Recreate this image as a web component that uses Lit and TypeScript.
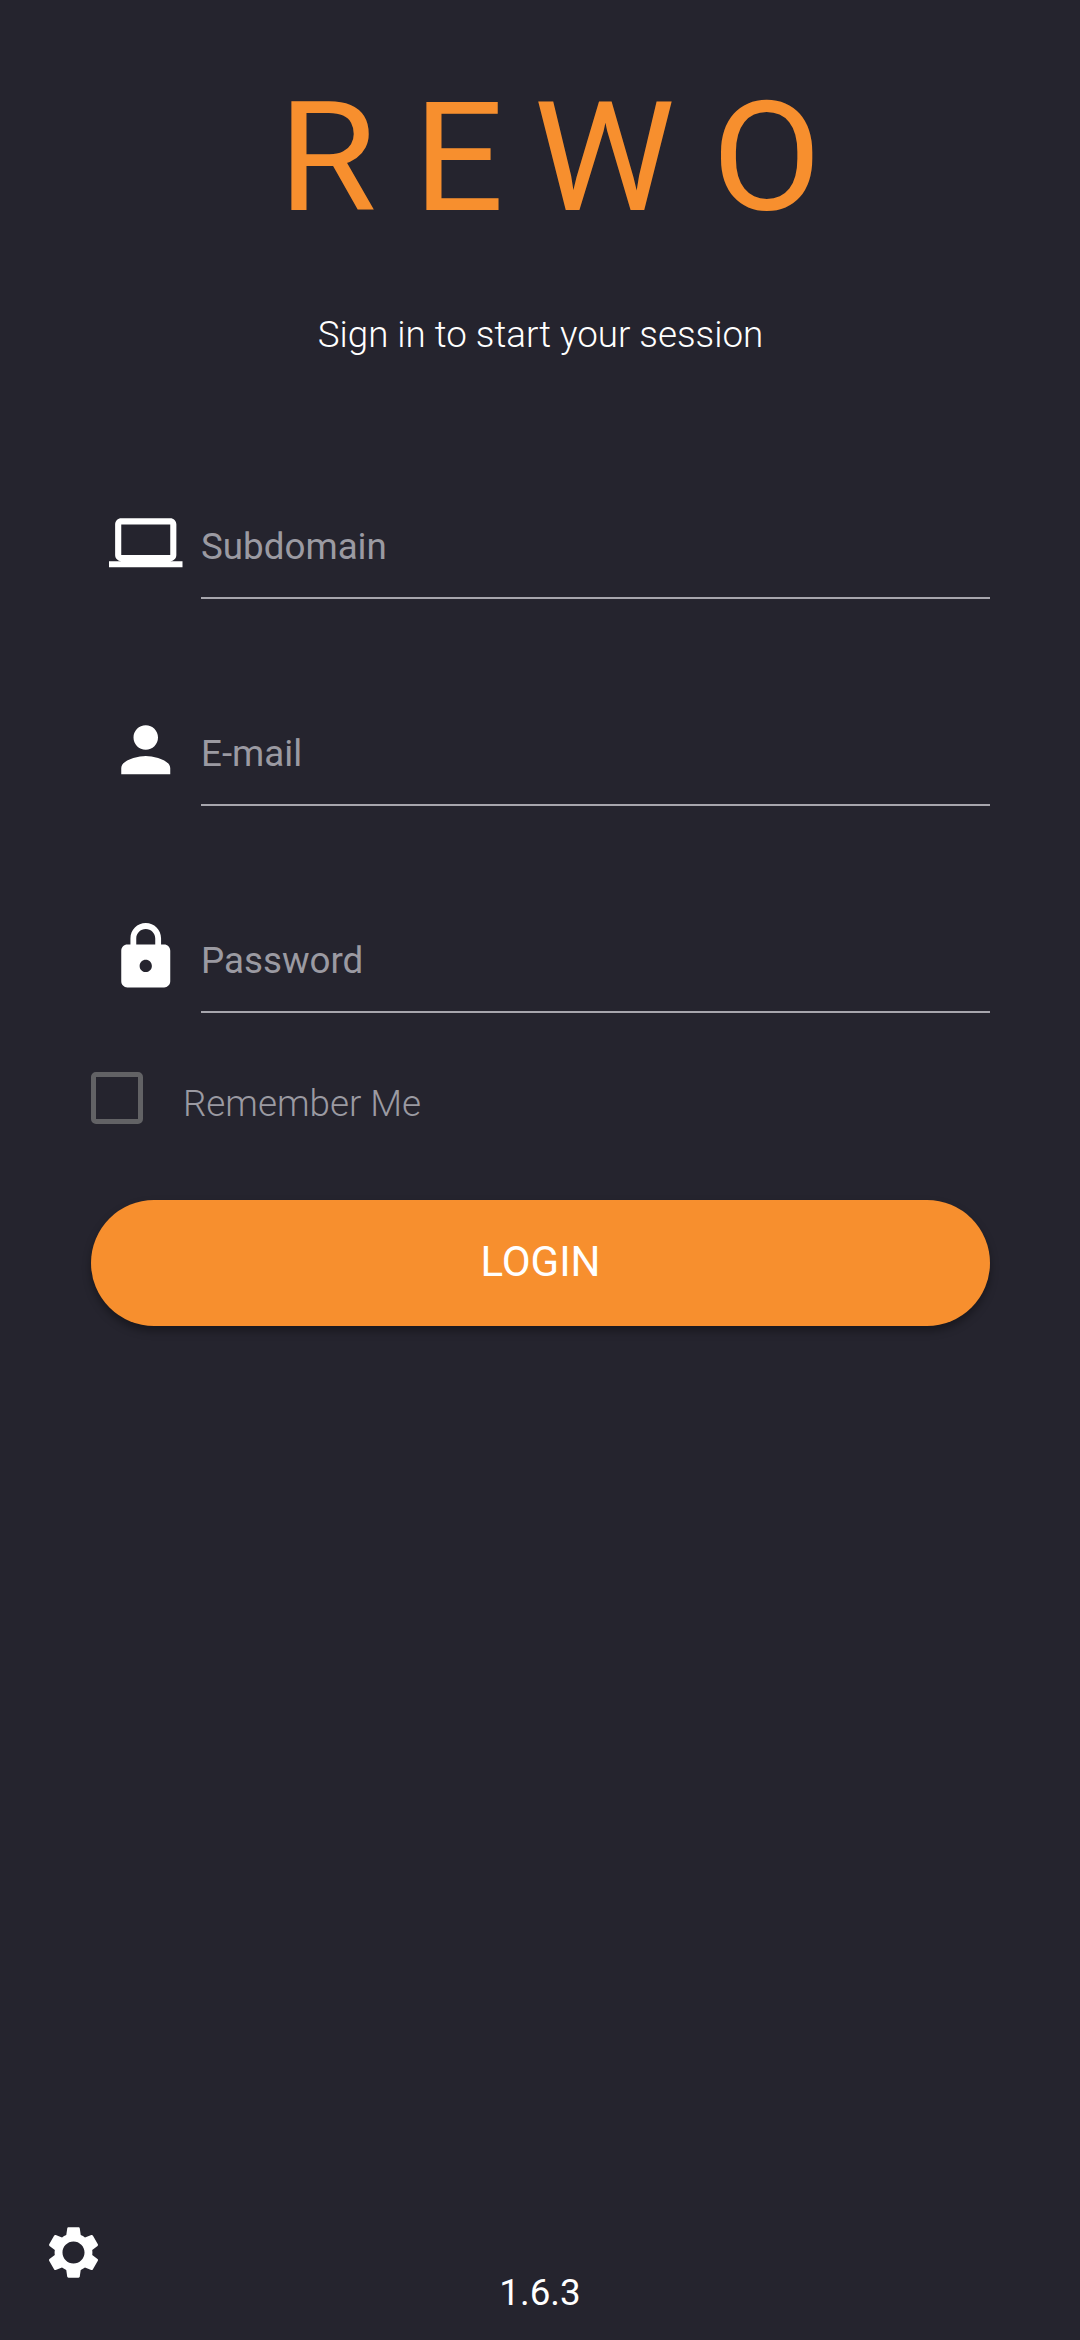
import { LitElement, html, css } from "lit";
import { customElement } from "lit/decorators.js";

@customElement("app-root")
export class AppRoot extends LitElement {
  static styles = css`
    :host {
      display: block;
      width: 1080px;
      height: 2340px;
      background: #25242e;
      font-family: Roboto, "Liberation Sans", sans-serif;
      color: #fff;
      overflow: hidden;
    }
    .page {
      height: 2340px;
      box-sizing: border-box;
      display: flex;
      flex-direction: column;
      padding: 0 90px 0 91px;
    }
    .logo {
      margin: 70px 0 0 0;
      padding-left: 55px;
      height: 176px;
      line-height: 176px;
      font-size: 152px;
      font-weight: 400;
      color: #f78f2e;
      text-align: center;
      white-space: nowrap;
    }
    .logo-text {
      display: inline-block;
      transform: scaleX(1.05);
      letter-spacing: 35px;
    }
    .logo-e {
      letter-spacing: 28px;
    }
    .subtitle {
      margin-top: 68px;
      line-height: 42px;
      font-size: 36.75px;
      font-weight: 300;
      text-align: center;
    }
    .fields {
      margin-top: 131px;
      display: flex;
      flex-direction: column;
      gap: 95px;
    }
    .field {
      display: grid;
      grid-template-columns: 110px 1fr;
      height: 112px;
    }
    .icon {
      display: flex;
      justify-content: center;
      align-items: center;
      width: 110px;
    }
    .icon svg {
      width: 73.5px;
      height: 73.5px;
      fill: #fff;
    }
    .input {
      font-size: 36.75px;
      color: #9b9aa2;
      border-bottom: 2px solid #a7a6ad;
      line-height: 42px;
      padding-top: 39px;
      box-sizing: border-box;
    }
    .remember {
      margin-top: 59px;
      display: flex;
      align-items: flex-start;
    }
    .box {
      width: 52px;
      height: 52px;
      box-sizing: border-box;
      border: 5px solid #626265;
      border-radius: 5px;
    }
    .remember span {
      margin-left: 40px;
      margin-top: 11px;
      line-height: 42px;
      font-size: 36.75px;
      font-weight: 300;
      color: #9b9aa2;
    }
    .login {
      margin-top: 75px;
      height: 126px;
      box-sizing: border-box;
      padding-bottom: 3px;
      border-radius: 63px;
      background: #f78f2e;
      display: flex;
      align-items: center;
      justify-content: center;
      font-size: 42px;
      color: #fff;
      box-shadow: 0 5px 8px rgba(0, 0, 0, 0.35);
    }
    .footer {
      margin: auto -90px 0 -91px;
      height: 119px;
      position: relative;
      text-align: center;
    }
    .gear {
      position: absolute;
      left: 42px;
      top: 0;
      width: 63px;
      height: 63px;
      fill: #fff;
    }
    .version {
      padding-top: 51px;
      line-height: 42px;
      font-size: 36.75px;
    }
  `;

  render() {
    return html`
      <div class="page">
        <div class="logo"><span class="logo-text">R<span class="logo-e">E</span>WO</span></div>
        <div class="subtitle">Sign in to start your session</div>
        <div class="fields">
          <div class="field">
            <div class="icon">
              <svg viewBox="0 0 24 24"><path d="M20 18c1.1 0 1.99-.9 1.99-2L22 6c0-1.1-.9-2-2-2H4c-1.1 0-2 .9-2 2v10c0 1.1.9 2 2 2H0v2h24v-2h-4zM4 6h16v10H4V6z" /></svg>
            </div>
            <div class="input">Subdomain</div>
          </div>
          <div class="field">
            <div class="icon">
              <svg viewBox="0 0 24 24"><path d="M12 12c2.21 0 4-1.79 4-4s-1.79-4-4-4-4 1.79-4 4 1.79 4 4 4zm0 2c-2.67 0-8 1.34-8 4v2h16v-2c0-2.66-5.33-4-8-4z" /></svg>
            </div>
            <div class="input">E-mail</div>
          </div>
          <div class="field">
            <div class="icon">
              <svg viewBox="0 0 24 24"><path d="M18 8h-1V6c0-2.76-2.24-5-5-5S7 3.24 7 6v2H6c-1.1 0-2 .9-2 2v10c0 1.1.9 2 2 2h12c1.1 0 2-.9 2-2V10c0-1.1-.9-2-2-2zm-6 9c-1.1 0-2-.9-2-2s.9-2 2-2 2 .9 2 2-.9 2-2 2zm3.1-9H8.9V6c0-1.71 1.39-3.1 3.1-3.1 1.71 0 3.1 1.39 3.1 3.1v2z" /></svg>
            </div>
            <div class="input">Password</div>
          </div>
        </div>
        <div class="remember">
          <div class="box"></div>
          <span>Remember Me</span>
        </div>
        <div class="login">LOGIN</div>
        <div class="footer">
          <svg class="gear" viewBox="0 0 24 24"><path d="M19.14 12.94c.04-.3.06-.61.06-.94 0-.32-.02-.64-.07-.94l2.03-1.58c.18-.14.23-.41.12-.61l-1.92-3.32c-.12-.22-.37-.29-.59-.22l-2.39.96c-.5-.38-1.03-.7-1.62-.94l-.36-2.54c-.04-.24-.24-.41-.48-.41h-3.84c-.24 0-.43.17-.47.41l-.36 2.54c-.59.24-1.13.57-1.62.94l-2.39-.96c-.22-.08-.47 0-.59.22L2.74 8.87c-.12.21-.08.47.12.61l2.03 1.58c-.05.3-.09.63-.09.94s.02.64.07.94l-2.03 1.58c-.18.14-.23.41-.12.61l1.92 3.32c.12.22.37.29.59.22l2.39-.96c.5.38 1.03.7 1.62.94l.36 2.54c.05.24.24.41.48.41h3.84c.24 0 .44-.17.47-.41l.36-2.54c.59-.24 1.13-.56 1.62-.94l2.39.96c.22.08.47 0 .59-.22l1.92-3.32c.12-.22.07-.47-.12-.61l-2.01-1.58zM12 16.2c-2.32 0-4.2-1.88-4.2-4.2s1.88-4.2 4.2-4.2 4.2 1.88 4.2 4.2-1.88 4.2-4.2 4.2z" /></svg>
          <div class="version">1.6.3</div>
        </div>
      </div>
    `;
  }
}
